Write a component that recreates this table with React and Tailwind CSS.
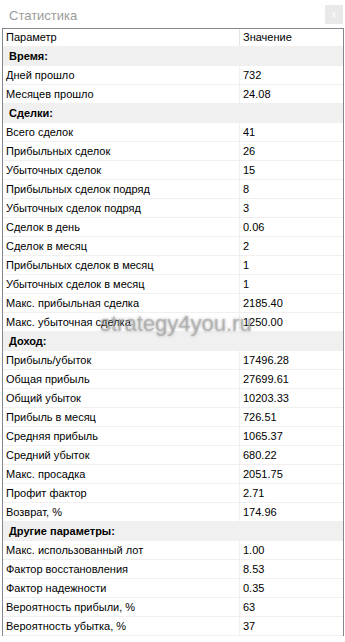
const sections = [
  {
    title: "Время:",
    rows: [
      ["Дней прошло", "732"],
      ["Месяцев прошло", "24.08"],
    ],
  },
  {
    title: "Сделки:",
    rows: [
      ["Всего сделок", "41"],
      ["Прибыльных сделок", "26"],
      ["Убыточных сделок", "15"],
      ["Прибыльных сделок подряд", "8"],
      ["Убыточных сделок подряд", "3"],
      ["Сделок в день", "0.06"],
      ["Сделок в месяц", "2"],
      ["Прибыльных сделок в месяц", "1"],
      ["Убыточных сделок в месяц", "1"],
      ["Макс. прибыльная сделка", "2185.40"],
      ["Макс. убыточная сделка", "1250.00"],
    ],
  },
  {
    title: "Доход:",
    rows: [
      ["Прибыль/убыток", "17496.28"],
      ["Общая прибыль", "27699.61"],
      ["Общий убыток", "10203.33"],
      ["Прибыль в месяц", "726.51"],
      ["Средняя прибыль", "1065.37"],
      ["Средний убыток", "680.22"],
      ["Макс. просадка", "2051.75"],
      ["Профит фактор", "2.71"],
      ["Возврат, %", "174.96"],
    ],
  },
  {
    title: "Другие параметры:",
    rows: [
      ["Макс. использованный лот", "1.00"],
      ["Фактор восстановления", "8.53"],
      ["Фактор надежности", "0.35"],
      ["Вероятность прибыли, %", "63"],
      ["Вероятность убытка, %", "37"],
    ],
  },
];

function Row({ name, value }) {
  return (
    <div className="flex h-[19px] border-b border-[#f0f0f0]">
      <div className="w-[237px] shrink-0 border-r border-[#f0f0f0] pl-[3px] leading-[18px]">{name}</div>
      <div className="pl-[3px] leading-[18px]">{value}</div>
    </div>
  );
}

export default function App() {
  return (
    <div className="relative h-[642px] w-[345px] overflow-hidden bg-white text-[11px] text-black" style={{ fontFamily: '"Liberation Sans", Arial, sans-serif' }}>
      {/* title bar */}
      <div className="flex h-[28px] items-start justify-between">
        <span className="pl-[9px] pt-[6px] text-[13px] text-[#9b9b9b]">Статистика</span>
        <div className="mr-[2px] mt-[5px] flex h-[19px] w-[18px] items-center justify-center bg-[#e9e9e9] text-[9px] leading-none text-white">x</div>
      </div>

      {/* table */}
      <div className="ml-[2px] w-[342px] border-x border-t border-[#828790]">
        <div className="flex h-[18px] border-b border-[#f0f0f0]">
          <div className="w-[237px] shrink-0 border-r border-[#e5e5e5] pl-[3px] leading-[17px]">Параметр</div>
          <div className="pl-[3px] leading-[17px]">Значение</div>
        </div>
        {sections.map((s) => (
          <div key={s.title}>
            <div className="h-[19px] border-b border-[#f0f0f0] bg-[#f0f0f0] pl-[6px] font-bold leading-[18px]">{s.title}</div>
            {s.rows.map(([n, v]) => (
              <Row key={n} name={n} value={v} />
            ))}
          </div>
        ))}
      </div>

      {/* watermark */}
      <div className="pointer-events-none absolute left-[100px] top-[307px] text-[22px] text-[#a0a0a0]/60 [text-shadow:0_0_3px_rgba(110,110,110,0.6)]">
        strategy4you.ru
      </div>
    </div>
  );
}
